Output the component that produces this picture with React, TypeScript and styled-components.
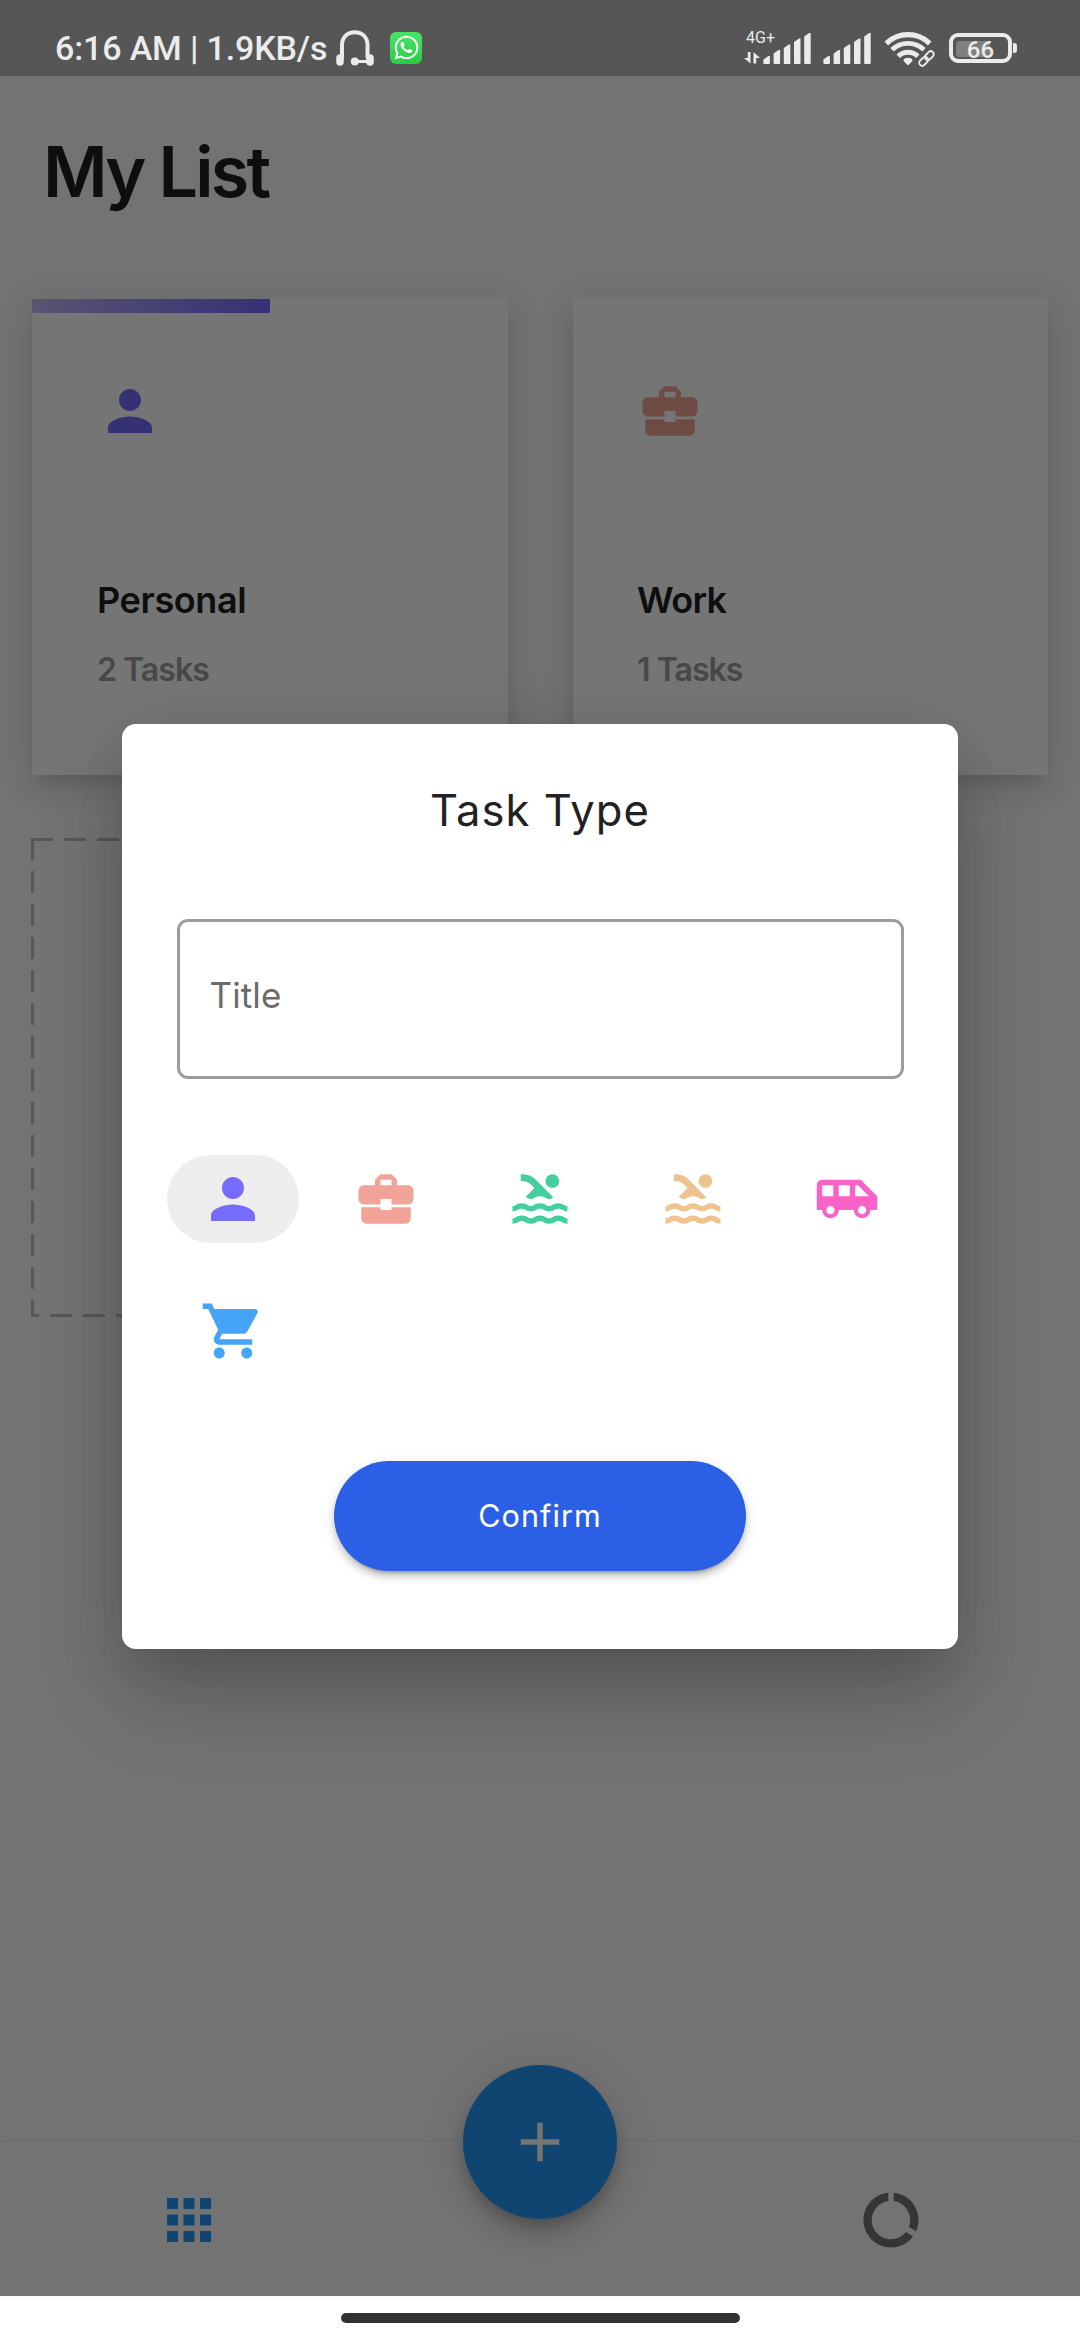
import React from "react";
import styled, { createGlobalStyle } from "styled-components";
import {
  MdAdd,
  MdAirportShuttle,
  MdApps,
  MdBusinessCenter,
  MdDataUsage,
  MdPerson,
  MdPool,
  MdShoppingCart,
} from "react-icons/md";
import { FaWhatsapp } from "react-icons/fa";

const GlobalStyle = createGlobalStyle`
  * { box-sizing: border-box; }
  body { margin: 0; background: #fff; }
`;

const Phone = styled.div`
  position: relative;
  width: 1080px;
  height: 2340px;
  display: flex;
  flex-direction: column;
  overflow: hidden;
  background: #fafafa;
  font-family: Inter, "Liberation Sans", sans-serif;
`;

/* ---------- status bar ---------- */

const StatusBar = styled.header`
  flex: none;
  height: 76px;
  padding: 19px 63px 0 55px;
  display: flex;
  justify-content: space-between;
  align-items: center;
  background: #565656;
  color: #ebebeb;
  font-family: Roboto, sans-serif;
`;

const StatusGroup = styled.div`
  display: flex;
  align-items: center;
`;

const Clock = styled.span`
  width: 281px;
  font-size: 34px;
  line-height: 40px;
  font-weight: 500;
  white-space: nowrap;
  letter-spacing: -0.15px;
`;

const WhatsappBadge = styled.span`
  width: 32px;
  height: 32px;
  margin-left: 16px;
  border-radius: 6px;
  display: flex;
  align-items: center;
  justify-content: center;
  background: linear-gradient(#48e468, #2bcb48);
  color: #fff;
`;

const Signal = styled.div<{ $width: number; $gap: number }>`
  position: relative;
  width: ${(p) => p.$width}px;
  height: 36px;
  margin-right: ${(p) => p.$gap}px;
  display: flex;
  justify-content: flex-end;
`;

const NetworkLabel = styled.span`
  position: absolute;
  left: 2px;
  top: 0;
  font-size: 16px;
  line-height: 16px;
`;

const DataArrows = styled.svg`
  position: absolute;
  left: 0;
  top: 22px;
`;

const Battery = styled.div`
  width: 63px;
  height: 30px;
  margin-left: 14px;
  padding: 3px;
  border: 4px solid #ebebeb;
  border-radius: 9px;
  display: grid;
  align-items: center;
`;

const BatteryFill = styled.span`
  grid-area: 1 / 1;
  width: 34px;
  height: 16px;
  border-radius: 3px;
  background: #808080;
`;

const BatteryText = styled.span`
  grid-area: 1 / 1;
  justify-self: center;
  padding-top: 1px;
  font-size: 24px;
  line-height: 18px;
  font-weight: 500;
`;

const BatteryNub = styled.span`
  width: 4px;
  height: 10px;
  margin-left: 1px;
  border-radius: 0 3px 3px 0;
  background: #ebebeb;
`;

/* ---------- list screen ---------- */

const Main = styled.main`
  flex: 1;
  padding: 0 32.4px;
`;

const Heading = styled.h1`
  margin: 0;
  height: 223px;
  padding: 53px 0 0 10.5px;
  font-size: 70px;
  line-height: 86px;
  font-weight: 600;
  letter-spacing: -2.8px;
  color: #1f1f1f;
`;

const CardGrid = styled.div`
  display: grid;
  grid-template-columns: 1fr 1fr;
  grid-auto-rows: 475.5px;
  gap: 65px;
`;

const Card = styled.section`
  display: flex;
  flex-direction: column;
  background: #fff;
  box-shadow:
    0 10px 14px -6px rgba(0, 0, 0, 0.1),
    0 14px 28px 2px rgba(0, 0, 0, 0.08),
    0 6px 38px 4px rgba(0, 0, 0, 0.06);
`;

const Progress = styled.div<{ $on: boolean }>`
  width: 50%;
  height: 14px;
  background: ${(p) => (p.$on ? "linear-gradient(to right, #c2b8fa, #756bfc)" : "none")};
`;

const CardBody = styled.div`
  padding: 65px 64.5px 0;
  display: flex;
  flex-direction: column;
`;

const CardTitle = styled.h2<{ $spacing: number }>`
  margin: 130px 0 0;
  font-size: 36px;
  line-height: 52px;
  font-weight: 600;
  letter-spacing: ${(p) => p.$spacing}px;
  color: #1f1f1f;
`;

const CardCount = styled.p`
  margin: 19px 0 0;
  font-size: 32px;
  line-height: 50px;
  font-weight: 600;
  letter-spacing: -0.95px;
  color: #9e9e9e;
`;

const dash = "#bdbdbd 0 22px, transparent 22px 33px";
const bottomDash = "#bdbdbd 0 8px, transparent 8px 19px, #bdbdbd 19px 33px";

const AddCard = styled.div`
  margin: -1.5px -1px;
  background:
    repeating-linear-gradient(to right, ${dash}) top / 100% 3px no-repeat,
    repeating-linear-gradient(to right, ${bottomDash}) bottom / 100% 3px no-repeat,
    repeating-linear-gradient(to bottom, ${dash}) left / 3px 100% no-repeat,
    repeating-linear-gradient(to bottom, ${dash}) right / 3px 100% no-repeat;
`;

/* ---------- bottom navigation ---------- */

const BottomNav = styled.nav`
  position: relative;
  flex: none;
  height: 154px;
  padding: 2px 156px 0;
  display: flex;
  justify-content: space-between;
  align-items: center;
  background: #fafafa;
  box-shadow: 0 -1px 6px rgba(0, 0, 0, 0.08);
`;

const Fab = styled.button`
  position: absolute;
  top: -77px;
  left: calc(50% - 77px);
  width: 154px;
  height: 154px;
  padding: 0;
  border: 0;
  border-radius: 50%;
  display: flex;
  align-items: center;
  justify-content: center;
  background: #2196f3;
  color: #fff;
  box-shadow:
    0 8px 14px -3px rgba(0, 0, 0, 0.2),
    0 16px 28px rgba(0, 0, 0, 0.14),
    0 3px 50px rgba(0, 0, 0, 0.08);
`;

const GestureArea = styled.footer`
  flex: none;
  height: 44px;
  padding-top: 17px;
  display: flex;
  justify-content: center;
  background: #fff;
`;

const GestureBar = styled.span`
  width: 399px;
  height: 10px;
  border-radius: 5px;
  background: #333;
`;

/* ---------- dialog ---------- */

const Scrim = styled.div`
  position: absolute;
  inset: 76px 0 44px;
  display: flex;
  align-items: center;
  justify-content: center;
  overflow: hidden;
  background: rgba(0, 0, 0, 0.54);
`;

const Dialog = styled.div`
  width: 836px;
  height: 925px;
  padding: 58.5px 54.5px 0;
  border-radius: 14px;
  display: flex;
  flex-direction: column;
  align-items: center;
  background: #fff;
  box-shadow:
    0 30px 60px -16px rgba(0, 0, 0, 0.16),
    0 50px 90px 0 rgba(0, 0, 0, 0.14),
    0 14px 90px 4px rgba(0, 0, 0, 0.06);
`;

const DialogTitle = styled.h2`
  margin: 0;
  font-size: 43.5px;
  line-height: 56px;
  font-weight: 400;
  letter-spacing: 1.1px;
  color: #212121;
`;

const TitleField = styled.div`
  width: 100%;
  height: 160px;
  margin-top: 81px;
  padding: 0 30px 8px;
  border: 3px solid #9c9c9c;
  border-radius: 11px;
  display: flex;
  align-items: center;
  font-size: 35px;
  font-weight: 400;
  letter-spacing: 0.1px;
  color: #6b6b6b;
`;

const Chips = styled.div`
  align-self: flex-start;
  margin: 75.5px 0 0 -10px;
  display: grid;
  grid-template-columns: repeat(5, 132px);
  grid-auto-rows: 88px;
  gap: 44px 21.6px;
`;

const Chip = styled.button<{ $color: string; $selected: boolean }>`
  padding: 0;
  border: 0;
  border-radius: 44px;
  display: flex;
  align-items: center;
  justify-content: center;
  background: ${(p) => (p.$selected ? "#eee" : "transparent")};
  color: ${(p) => p.$color};
`;

const ConfirmButton = styled.button`
  width: 412.5px;
  height: 110px;
  margin-top: 86.5px;
  padding: 0 0 2px;
  border: 0;
  border-radius: 55px;
  background: #2b60e6;
  color: #fff;
  font-family: inherit;
  font-size: 30.5px;
  letter-spacing: 1.1px;
  box-shadow:
    0 8px 3px -6px rgba(0, 0, 0, 0.2),
    0 6px 6px rgba(0, 0, 0, 0.14),
    0 3px 14px rgba(0, 0, 0, 0.12);
`;

const CardIcon = styled.span<{ $color: string }>`
  display: flex;
  color: ${(p) => p.$color};
`;

const barTops = [26, 20, 14.5, 8.5, 3];

function SignalBars() {
  return (
    <svg width="48" height="36" viewBox="0 0 48 36" fill="#ebebeb">
      {barTops.map((top, i) => {
        const x = i * 10.2 + 0.4;
        return (
          <path
            key={i}
            d={`M${x} ${top + 3.5} L${x + 5} ${top} H${x + 6.5} V33 Q${x + 6.5} 34 ${x + 5.5} 34 H${x + 1} Q${x} 34 ${x} 33Z`}
          />
        );
      })}
    </svg>
  );
}

function Headphones() {
  return (
    <svg width="38" height="36" viewBox="0 0 38 36" fill="none" stroke="#ebebeb" strokeLinecap="round">
      <path d="M6 27V15C6 7 11.5 2.2 18.8 2.2S31.5 7 31.5 15V27" strokeWidth="4" />
      <path d="M4 28V32M34 28V32" strokeWidth="7.5" />
      <path d="M19 31.5H32" strokeWidth="3" />
      <circle cx="18.8" cy="31.5" r="4" fill="#ebebeb" stroke="none" />
    </svg>
  );
}

function Wifi() {
  return (
    <svg width="51" height="38" viewBox="0 0 51 38" fill="none" stroke="#ebebeb">
      <path d="M2.3 14.5A31.2 31.2 0 0 1 45.7 14.5" strokeWidth="5.3" />
      <path d="M8 20.8A23 23 0 0 1 40 20.8" strokeWidth="4.8" />
      <path d="M14.2 27.2A14 14 0 0 1 33.8 27.2" strokeWidth="5" />
      <path d="M24 36.5L19.5 32Q19.5 28.8 24 28.8T28.5 32Z" fill="#ebebeb" stroke="none" />
      <g strokeWidth="1.9" transform="translate(42.5 29.5) rotate(-45)">
        <rect x="-9" y="-3" width="10" height="6" rx="3" />
        <rect x="-1" y="-3" width="10" height="6" rx="3" />
      </g>
    </svg>
  );
}

const lists = [
  { name: "Personal", count: "2 Tasks", Icon: MdPerson, color: "#756bfc", active: true, spacing: -0.35 },
  { name: "Work", count: "1 Tasks", Icon: MdBusinessCenter, color: "#f1a398", active: false, spacing: -0.7 },
];

const types = [
  { Icon: MdPerson, color: "#756bfc" },
  { Icon: MdBusinessCenter, color: "#f1a398" },
  { Icon: MdPool, color: "#45cf9f" },
  { Icon: MdPool, color: "#eec38f" },
  { Icon: MdAirportShuttle, color: "#f963c7" },
  { Icon: MdShoppingCart, color: "#45a4f5" },
];

export default function App() {
  return (
    <Phone>
      <GlobalStyle />
      <StatusBar>
        <StatusGroup>
          <Clock>6:16 AM | 1.9KB/s</Clock>
          <Headphones />
          <WhatsappBadge>
            <FaWhatsapp size={27} />
          </WhatsappBadge>
        </StatusGroup>
        <StatusGroup>
          <Signal $width={67} $gap={12}>
            <NetworkLabel>4G+</NetworkLabel>
            <DataArrows width="17" height="12" viewBox="0 0 17 12" fill="#ebebeb">
              <path d="M3.8 0H6.5V11.5L0 6H3.8ZM9.5 0L16 6H12.2V11.5H9.5Z" />
            </DataArrows>
            <SignalBars />
          </Signal>
          <Signal $width={48} $gap={13}>
            <SignalBars />
          </Signal>
          <Wifi />
          <Battery>
            <BatteryFill />
            <BatteryText>66</BatteryText>
          </Battery>
          <BatteryNub />
        </StatusGroup>
      </StatusBar>

      <Main>
        <Heading>My List</Heading>
        <CardGrid>
          {lists.map(({ name, count, Icon, color, active, spacing }) => (
            <Card key={name}>
              <Progress $on={active} />
              <CardBody>
                <CardIcon $color={color}>
                  <Icon size={66} />
                </CardIcon>
                <CardTitle $spacing={spacing}>{name}</CardTitle>
                <CardCount>{count}</CardCount>
              </CardBody>
            </Card>
          ))}
          <AddCard />
        </CardGrid>
      </Main>

      <BottomNav>
        <MdApps size={66} color="#2196f3" />
        <MdDataUsage size={66} color="#737373" />
        <Fab aria-label="Add">
          <MdAdd size={66} />
        </Fab>
      </BottomNav>
      <GestureArea>
        <GestureBar />
      </GestureArea>

      <Scrim>
        <Dialog role="dialog">
          <DialogTitle>Task Type</DialogTitle>
          <TitleField>Title</TitleField>
          <Chips>
            {types.map(({ Icon, color }, i) => (
              <Chip key={i} $color={color} $selected={i === 0}>
                <Icon size={66} />
              </Chip>
            ))}
          </Chips>
          <ConfirmButton>Confirm</ConfirmButton>
        </Dialog>
      </Scrim>
    </Phone>
  );
}
